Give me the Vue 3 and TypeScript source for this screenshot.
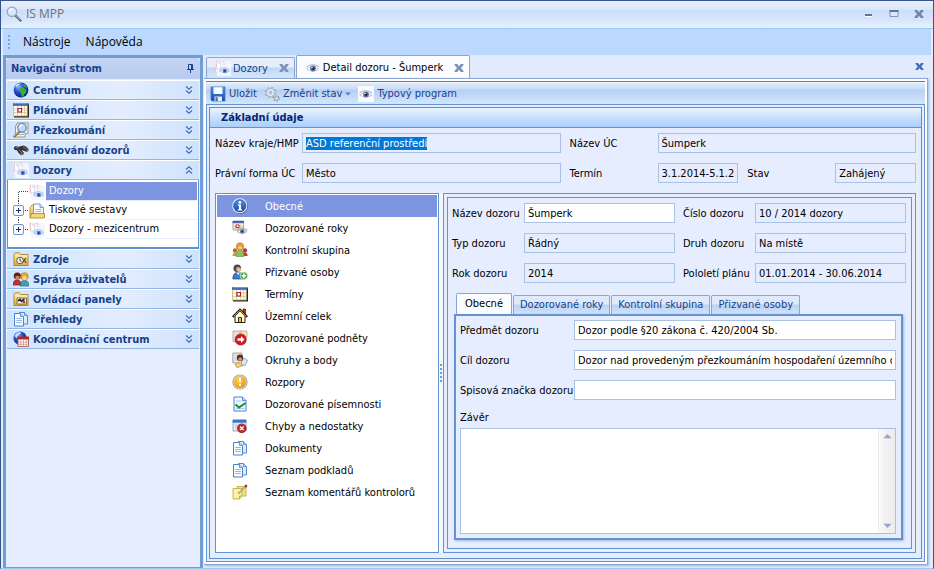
<script setup lang="ts">
import { onMounted, reactive, ref } from 'vue'

interface NavGroup {
  label: string
  icon: string
}
interface TreeNode {
  label: string
  icon: string
  expandable: boolean
}

const groupsAbove: NavGroup[] = [
  { label: 'Centrum', icon: 'globe' },
  { label: 'Plánování', icon: 'calendar' },
  { label: 'Přezkoumání', icon: 'review' },
  { label: 'Plánování dozorů', icon: 'binoculars' },
  { label: 'Dozory', icon: 'eye-doc' },
]
const groupsBelow: NavGroup[] = [
  { label: 'Zdroje', icon: 'folder-clock' },
  { label: 'Správa uživatelů', icon: 'users' },
  { label: 'Ovládací panely', icon: 'folder-gauge' },
  { label: 'Přehledy', icon: 'docs' },
  { label: 'Koordinační centrum', icon: 'globe-cal' },
]
const tree: TreeNode[] = [
  { label: 'Dozory', icon: 'eye-doc', expandable: false },
  { label: 'Tiskové sestavy', icon: 'reports', expandable: true },
  { label: 'Dozory - mezicentrum', icon: 'eye-doc', expandable: true },
]
const sections: NavGroup[] = [
  { label: 'Obecné', icon: 'info' },
  { label: 'Dozorované roky', icon: 'cal-eye' },
  { label: 'Kontrolní skupina', icon: 'group' },
  { label: 'Přizvané osoby', icon: 'user-add' },
  { label: 'Termíny', icon: 'calendar' },
  { label: 'Územní celek', icon: 'house' },
  { label: 'Dozorované podněty', icon: 'doc-arrow' },
  { label: 'Okruhy a body', icon: 'doc-person' },
  { label: 'Rozpory', icon: 'warning' },
  { label: 'Dozorované písemnosti', icon: 'doc-check' },
  { label: 'Chyby a nedostatky', icon: 'win-error' },
  { label: 'Dokumenty', icon: 'docs' },
  { label: 'Seznam podkladů', icon: 'docs' },
  { label: 'Seznam komentářů kontrolorů', icon: 'notes' },
]
const detailTabs = ['Obecné', 'Dozorované roky', 'Kontrolní skupina', 'Přizvané osoby']

const activeNode = ref(0)
const activeSection = ref(0)
const activeTab = ref(0)
const treeOpen = ref(true)
const regionInput = ref<HTMLInputElement | null>(null)

const form = reactive({
  region: 'ASD referenční prostředí',
  unit: 'Šumperk',
  legal: 'Město',
  term: '3.1.2014-5.1.2',
  state: 'Zahájený',
  name: 'Šumperk',
  number: '10 / 2014 dozory',
  type: 'Řádný',
  kind: 'Na místě',
  year: '2014',
  half: '01.01.2014 - 30.06.2014',
  subject: 'Dozor podle §20 zákona č. 420/2004 Sb.',
  goal: 'Dozor nad provedeným přezkoumáním hospodaření územního celk',
  file: '',
  conclusion: '',
})

function toggleGroup(label: string) {
  if (label === 'Dozory') treeOpen.value = !treeOpen.value
}

onMounted(() => {
  regionInput.value?.focus()
  regionInput.value?.select()
})
</script>

<template>
  <div class="window">
    <svg class="sprite" aria-hidden="true">
      <defs>
        <linearGradient id="gBlue" x1="0" y1="0" x2="0" y2="1">
          <stop offset="0" stop-color="#4f90e6" /><stop offset="1" stop-color="#1549a8" />
        </linearGradient>
        <linearGradient id="gFolder" x1="0" y1="0" x2="0" y2="1">
          <stop offset="0" stop-color="#fbeeb0" /><stop offset="1" stop-color="#e0ac3c" />
        </linearGradient>
        <radialGradient id="gGlobe" cx="0.35" cy="0.3" r="0.8">
          <stop offset="0" stop-color="#8fb6ff" /><stop offset="0.4" stop-color="#2c50d6" /><stop offset="1" stop-color="#0a1264" />
        </radialGradient>
        <radialGradient id="gAmber" cx="0.4" cy="0.3" r="0.8">
          <stop offset="0" stop-color="#ffd34e" /><stop offset="1" stop-color="#ec8b06" />
        </radialGradient>
        <symbol id="search" viewBox="0 0 16 16">
          <path d="M9.500 9.500l5 5" stroke="#56606e" stroke-width="2.400" stroke-linecap="round" />
          <path d="M10 9.500l4.500 4.500" stroke="#c0cad6" stroke-width="1" />
          <circle cx="6" cy="5.800" r="4.700" fill="#d4eafb" stroke="#9aa5b3" stroke-width="1.300" />
          <path d="M3.200 5.600A3 3 0 0 1 6.400 2.800" fill="none" stroke="#fff" stroke-width="1.300" />
        </symbol>
        <symbol id="globe" viewBox="0 0 16 16">
          <circle cx="8" cy="8" r="7.400" fill="url(#gGlobe)" />
          <path d="M2 5c1-2 3-3.700 5-4l1 1-1.500 1.500L5.500 4 4.500 6 3 6.500z" fill="#6f9fd0" />
          <path d="M6.500 6l3.500-.5 3.500 2.500L13 11l-2 1.500-.5 2.700-2-1L8 11 6 8.500z" fill="#2fb335" />
          <path d="M10 1.800l3 1.500 1.200 2.500-2-.5-1.700-1z" fill="#3b9b45" />
          <path d="M3 4.500a6 6 0 0 1 3-2.500" stroke="#e8f3ff" stroke-width="1.200" fill="none" />
        </symbol>
        <symbol id="calendar" viewBox="0 0 16 16">
          <path d="M1 2h15v13.500H1z" fill="#2c2618" />
          <path d="M0 2h14.700v12.300H0z" fill="#d3bd80" />
          <path d="M1 4h12.700v9.500H1z" fill="#fffce6" />
          <path d="M1 7h12.700M1 10.500h12.700M4.500 4v9.500M8.500 4v9.500M11.500 4v9.500" stroke="#cfc090" stroke-width="0.800" />
          <path d="M0 1h15.500v2.700H0z" fill="#3559b5" /><path d="M.5 1.300h14v.9H.5z" fill="#8caef0" />
          <path d="M5 6.500h3.500V10H5z" fill="#fff" stroke="#a8203c" stroke-width="1.200" />
        </symbol>
        <symbol id="review" viewBox="0 0 16 16">
          <path d="M4 1h11v10.500h-3v3.500H2.500V5z" fill="#f7f5ee" stroke="#9a978b" />
          <path d="M5 12.500h6M6 10.500h6" stroke="#a4a8b4" />
          <path d="M6.500 9.500l-5 5" stroke="#9b6b3b" stroke-width="2.400" stroke-linecap="round" />
          <path d="M6 9.500l-4.500 4.500" stroke="#eebc72" stroke-width="0.900" />
          <circle cx="9" cy="5.800" r="4.300" fill="#bcd9fb" stroke="#6784b5" stroke-width="1.200" />
          <path d="M6.500 5.500A2.600 2.600 0 0 1 9 3" stroke="#fff" stroke-width="1.300" fill="none" />
        </symbol>
        <symbol id="binoculars" viewBox="0 0 16 16">
          <path d="M.6 5.800L2.500 4l2.800.7L8 4.200l2-.6 2.500.7L15.600 7l-.4 2-2 .8-3.700-1.600-.8.300 2.200 2.300-.7 2-2.200.5-2.400-2.300L4 8.300 1.700 8z" fill="#353231" />
          <path d="M2.500 5.500l3 .4M10 5l3.500 2M6 8l3 3" stroke="#8d8784" stroke-width="0.900" />
          <ellipse cx="9" cy="12" rx="1.500" ry="1" fill="#76706d" /><ellipse cx="14.300" cy="8.500" rx="1" ry="1.200" fill="#76706d" />
        </symbol>
        <symbol id="eye" viewBox="0 0 16 16">
          <path d="M0 0h16v16H0z" fill="#f8fafe" />
          <path d="M1.500 9Q7.500 4.500 14 9 8 13 1.500 9z" fill="#fff" stroke="#b5c0d4" stroke-width="0.800" />
          <path d="M1.500 6.800Q7.500 2.800 14 6.800" fill="none" stroke="#99a7c0" stroke-width="0.900" />
          <circle cx="8" cy="8.500" r="2.900" fill="#5d7396" /><circle cx="8" cy="8.500" r="1.400" fill="#1c2840" />
          <circle cx="7" cy="7.500" r=".8" fill="#fff" />
        </symbol>
        <symbol id="eye-doc" viewBox="0 0 16 16">
          <path d="M0 1h14l2 2v13H2z" fill="#f3f6fd" />
          <path d="M1.500 1h4v8h-4z" fill="#fff" stroke="#d3dbee" stroke-width="0.800" />
          <path d="M1.200 1v8M3 3h2.500" stroke="#f7bdb8" />
          <path d="M7 1.500h2V5" fill="none" stroke="#f7c8c2" />
          <path d="M4.500 11Q9.500 7.500 14.500 11 10 14.500 4.500 11z" fill="#e8effd" stroke="#9db8ea" stroke-width="0.800" />
          <path d="M4.500 9.300Q9.500 6 14.500 9.300" fill="none" stroke="#9db8ea" stroke-width="0.900" />
          <circle cx="9.800" cy="10.900" r="2.100" fill="#4f79cb" /><circle cx="9.800" cy="10.900" r=".9" fill="#1c3b85" />
        </symbol>
        <symbol id="folder" viewBox="0 0 16 16">
          <path d="M1 3.500l1.200-1.700h4L7.500 3.500H15V14.500H1z" fill="url(#gFolder)" stroke="#b07f1d" stroke-width="0.900" />
          <path d="M2 5h12.500" stroke="#fff6c9" />
        </symbol>
        <symbol id="folder-clock" viewBox="0 0 16 16">
          <use href="#folder" />
          <circle cx="7" cy="9.500" r="3.300" fill="#fff" stroke="#5d5442" />
          <path d="M7 7.500v2.200l1.500 1" stroke="#222" fill="none" />
          <path d="M10 11l3-4M11 8l2 4" stroke="#6a4b21" stroke-width="1.200" />
        </symbol>
        <symbol id="folder-gauge" viewBox="0 0 16 16">
          <use href="#folder" />
          <path d="M4 7h9.500v6H4z" fill="#f9f6ee" stroke="#6a5b35" stroke-width="0.800" />
          <path d="M5 10l2-1.500 1.500 1.800L11.500 8" stroke="#2e2220" stroke-width="1.800" fill="none" />
          <circle cx="11" cy="11" r="1.300" fill="#b03527" />
        </symbol>
        <symbol id="users" viewBox="0 0 16 16">
          <path d="M0 14q0-5 4-5t4.500 5z" fill="#c23030" stroke="#6d1717" stroke-width="0.600" />
          <path d="M7 15q0-5.500 4.500-5.500T16 15z" fill="#3fa0b0" stroke="#225a66" stroke-width="0.600" />
          <circle cx="4.300" cy="5" r="3.600" fill="#5e2418" /><path d="M2.500 5.500q2-1.500 4 0v2q-2 2.500-4 0z" fill="#d98552" />
          <circle cx="11.500" cy="5.300" r="3.600" fill="#efab2d" stroke="#a76a14" stroke-width="0.600" /><path d="M9.500 6q2-1.500 4 0v2q-2 2.300-4 0z" fill="#fbd8a3" />
        </symbol>
        <symbol id="docs" viewBox="0 0 16 16">
          <path d="M6.500 1.500h5l3 3V13h-8z" fill="#dcebfd" stroke="#5589cf" />
          <path d="M11.500 1.500v3h3" fill="#a9caf3" stroke="#5589cf" stroke-width="0.800" />
          <path d="M1.500 2.500h6l3 3V15h-9z" fill="#fafdff" stroke="#4a80c9" />
          <path d="M7.500 2.500v3h3" fill="#cbe0f9" stroke="#4a80c9" stroke-width="0.800" />
          <path d="M3.300 7.500h5.500M3.300 9.500h5.500M3.300 11.500h5.500" stroke="#82abe2" stroke-width="0.900" />
        </symbol>
        <symbol id="globe-cal" viewBox="0 0 16 16">
          <circle cx="7" cy="7" r="6.600" fill="url(#gGlobe)" />
          <path d="M1.500 5Q3 1.500 7 1l1 1.500L5 4 4 7z" fill="#c8e0f8" />
          <path d="M5 6.500h10.500V15.500H5z" fill="#fff" stroke="#a5574d" stroke-width="0.900" />
          <path d="M4.500 5.500H16v3H4.500z" fill="#b5281c" />
          <path d="M5 11h10.500M5 13.300h10.500M7.700 8.500v7M10.500 8.500v7M13.200 8.500v7" stroke="#d1988f" stroke-width="0.800" />
        </symbol>
        <symbol id="reports" viewBox="0 0 16 16">
          <path d="M1 14.500V4.500L3 2h4v12.500z" fill="url(#gFolder)" stroke="#b88a26" stroke-width="0.900" />
          <path d="M4.500 1h6.500l3.500 3.500V12h-10z" fill="#fbfdff" stroke="#6d8bbd" stroke-width="0.900" />
          <path d="M11 1v3.500h3.500" fill="#cfe0f7" stroke="#6d8bbd" stroke-width="0.800" />
          <path d="M6.500 6.500h6M6.500 8.500h6" stroke="#95b4e2" />
          <path d="M2.500 10.500h13v4.500H1z" fill="#f6d778" stroke="#b88a26" stroke-width="0.900" />
        </symbol>
        <symbol id="info" viewBox="0 0 16 16">
          <circle cx="8.500" cy="8.500" r="7.500" fill="#3c4c78" opacity=".6" />
          <circle cx="7.800" cy="7.800" r="7.500" fill="#fff" /><circle cx="7.800" cy="7.800" r="6.200" fill="url(#gBlue)" stroke="#1a4599" stroke-width="0.700" />
          <circle cx="7.900" cy="4.400" r="1.400" fill="#fff" /><path d="M5.800 6.500H9v4.800h1.200v1.300H5.800v-1.300H7V7.800H5.800z" fill="#fff" />
        </symbol>
        <symbol id="cal-eye" viewBox="0 0 16 16">
          <path d="M1 1h10.500v9H1z" fill="#fff9e2" stroke="#9f9170" stroke-width="0.800" />
          <path d="M.6 1h11.300v2.200H.6z" fill="#3f63b8" />
          <path d="M1 6h10M1 8h10M4 3v7M8 3v7" stroke="#cabb90" stroke-width="0.800" />
          <path d="M4 5h3v2.500H4z" fill="#fff" stroke="#b11c3a" stroke-width="0.900" />
          <path d="M5 11.500Q10 7.500 15 11.500 10 15 5 11.500z" fill="#f1f4fa" stroke="#98a4b9" stroke-width="0.900" />
          <path d="M5 9.500Q10 6.500 15.500 10" fill="none" stroke="#98a4b9" stroke-width="0.900" />
          <circle cx="10.200" cy="11.400" r="2.200" fill="#5f7ba8" /><circle cx="10.200" cy="11.400" r=".9" fill="#1c2a45" />
        </symbol>
        <symbol id="group" viewBox="0 0 16 16">
          <circle cx="3" cy="8.500" r="2.200" fill="#b56b36" /><circle cx="13" cy="8.500" r="2.200" fill="#a3452b" />
          <path d="M.5 14q0-3.500 2.700-3.500T6 14z" fill="#d99a30" /><path d="M10 14q0-3.500 2.800-3.500t2.800 3.500z" fill="#c8372c" />
          <path d="M4 14.500Q4 8 8 8t4 6.500z" fill="#8fbf5a" stroke="#5c8d2f" stroke-width="0.600" />
          <circle cx="8" cy="4.400" r="3.600" fill="#ef9a2d" stroke="#bb6c14" stroke-width="0.600" />
          <path d="M6.200 4.700q1.800-1.200 3.600 0v1.700q-1.800 2-3.600 0z" fill="#fbc98a" />
        </symbol>
        <symbol id="user-add" viewBox="0 0 16 16">
          <path d="M.8 15Q.8 8.300 6 8.300T11.500 15z" fill="#3f7dcb" stroke="#23497f" stroke-width="0.700" />
          <path d="M4.500 8.500L6.300 11 8 8.500z" fill="#fff" />
          <circle cx="5.300" cy="4.300" r="3.800" fill="#45484f" /><path d="M4.200 3.500q2.500-.7 4.600.5v2.400Q7 9.200 4.500 6.500z" fill="#eebc93" />
          <circle cx="11.800" cy="11.800" r="3.700" fill="#45a53a" stroke="#c9e7c3" stroke-width="0.900" />
          <path d="M11.800 9.600V14M9.600 11.800H14" stroke="#fff" stroke-width="1.600" />
        </symbol>
        <symbol id="house" viewBox="0 0 16 16">
          <path d="M11 1h2.500v5H11z" fill="#d3232a" stroke="#5a0f10" stroke-width="0.700" />
          <path d="M3 8l5-5 5 5v6.500H3z" fill="#fffde0" stroke="#1e1a12" />
          <path d="M.8 9L8 1.800 15.200 9" fill="none" stroke="#1e1a12" stroke-width="2.200" />
          <path d="M1.700 8.500L8 2.300l6.300 6.200" fill="none" stroke="#f5d64a" stroke-width="0.900" />
          <path d="M6.500 9.500h3v5h-3z" fill="#f2c12d" stroke="#1e1a12" stroke-width="0.900" />
        </symbol>
        <symbol id="doc-arrow" viewBox="0 0 16 16">
          <path d="M1 1h9v10.500H1z" fill="#e5e3da" stroke="#b5b1a6" /><path d="M8 1h7v6H8z" fill="#ece2b8" stroke="#b5a878" stroke-width="0.700" />
          <circle cx="8.700" cy="9.500" r="5.600" fill="#d01a22" stroke="#9c1016" stroke-width="0.600" />
          <path d="M5.500 8.200H9V6l3.500 3.500L9 13v-2.200H5.500z" fill="#fff" />
        </symbol>
        <symbol id="doc-person" viewBox="0 0 16 16">
          <path d="M.8 1H10v10H.8z" fill="#dfe0e2" stroke="#a9a9a9" /><path d="M3 12.500l4-2 4 3-6 2.200z" fill="#f5d980" stroke="#a58328" stroke-width="0.700" />
          <circle cx="8" cy="5.800" r="3.200" fill="#5f2f1c" /><path d="M6.500 6q1.700-1 3.300 0v2Q8 9.500 6.500 8z" fill="#e89a4d" />
          <path d="M9 11l3-5 3.500 2.500-2.500 5-3.500-.5z" fill="#dbe6f8" stroke="#7c91b8" stroke-width="0.800" />
          <path d="M4.500 12l4-2 1 4" fill="#f2c75c" />
        </symbol>
        <symbol id="warning" viewBox="0 0 16 16">
          <circle cx="8" cy="8" r="7.600" fill="#8f8b82" /><circle cx="8" cy="8" r="6.900" fill="#d9d5ca" />
          <circle cx="8" cy="8" r="5.900" fill="url(#gAmber)" />
          <path d="M7 3.800h2l-.3 5H7.300z" fill="#fff" /><circle cx="8" cy="10.900" r="1.100" fill="#fff" />
        </symbol>
        <symbol id="doc-check" viewBox="0 0 16 16">
          <path d="M2 1h8.500L14 4.500V15H2z" fill="#f1f7ff" stroke="#4b83cf" />
          <path d="M10.500 1v3.500H14" fill="#b7d4f7" stroke="#4b83cf" stroke-width="0.900" />
          <path d="M4 5h5M4 12.500h8.500" stroke="#a7c6ee" />
          <path d="M3.500 8.500l3.500 3L13.500 7" fill="none" stroke="#148c36" stroke-width="1.900" />
        </symbol>
        <symbol id="win-error" viewBox="0 0 16 16">
          <path d="M1 2h13v11H1z" fill="#e3e8f0" stroke="#9aaac3" /><path d="M.7 1.700h13.600v3H.7z" fill="#3d74c9" />
          <path d="M3 7h5M3 9h3" stroke="#c3cad6" />
          <circle cx="9.800" cy="10.300" r="4.400" fill="#c42b2c" stroke="#841317" stroke-width="0.700" />
          <path d="M8 8.500l3.600 3.600M11.600 8.500L8 12.100" stroke="#fff" stroke-width="1.300" />
        </symbol>
        <symbol id="notes" viewBox="0 0 16 16">
          <path d="M5 2.500h9V12H5z" fill="#f1e67c" stroke="#b8aa3a" stroke-width="0.800" />
          <path d="M1 4.500h9V12l-2.500 3H1z" fill="#fbf3a2" stroke="#b8aa3a" stroke-width="0.800" />
          <path d="M10 12H7.500v3" fill="#e1d158" stroke="#b8aa3a" stroke-width="0.800" />
          <path d="M6.500 9.500L14 2" stroke="#757162" stroke-width="1.500" /><path d="M7 9l6.500-6.500" stroke="#e5e2d4" stroke-width="0.700" />
          <path d="M13.200 2.800l1.600-1.600" stroke="#c42a26" stroke-width="2.400" />
        </symbol>
        <symbol id="save" viewBox="0 0 16 16">
          <path d="M1 1h14v14H2.200L1 13.800z" fill="url(#gBlue)" stroke="#3d70ba" stroke-width="0.800" />
          <path d="M3.500 1.200h9v6.800h-9z" fill="#f7fbff" /><path d="M4.500 10.500h7.500V15H4.500z" fill="#e3edfa" /><path d="M5.500 11.300h2.200V15H5.500z" fill="#3c6cb8" />
        </symbol>
        <symbol id="gears" viewBox="0 0 16 16">
          <circle cx="6.500" cy="6.500" r="5" fill="none" stroke="#a3adbb" stroke-width="1.600" stroke-dasharray="2 1.930" />
          <circle cx="6.500" cy="6.500" r="4" fill="#f4f7fb" stroke="#9ca7b7" stroke-width="0.900" /><circle cx="6.500" cy="6.500" r="1.700" fill="#b5cbee" stroke="#93a1b6" stroke-width="0.700" />
          <circle cx="12.500" cy="12.500" r="2.600" fill="none" stroke="#8693a6" stroke-width="1.400" stroke-dasharray="1.400 1.320" />
          <circle cx="12.500" cy="12.500" r="1.700" fill="#f2f6fb" stroke="#8693a6" stroke-width="0.800" />
        </symbol>
        <symbol id="close" viewBox="0 0 10 10">
          <path d="M.5 1h2.800L5 3.300 6.700 1h2.800v1L7 5l2.500 3v1H6.700L5 6.700 3.300 9H.5V8L3 5 .5 2z" />
        </symbol>
      </defs>
    </svg>

    <header class="titlebar">
      <svg class="app-icon"><use href="#search" /></svg>
      <span class="title">IS MPP</span>
      <div class="win-buttons">
        <button type="button" aria-label="Minimalizovat">
          <svg viewBox="0 0 10 10"><path d="M1 5h7v2H1z" fill="#66758f" /><path d="M1 7h7v1H1z" fill="#fff" /></svg>
        </button>
        <button type="button" aria-label="Maximalizovat">
          <svg viewBox="0 0 10 10"><path d="M1 1.500h8v6H1z" fill="#dbe6f8" stroke="#8195b8" /><path d="M.5 1h9v2h-9z" fill="#66758f" /></svg>
        </button>
        <button type="button" aria-label="Zavřít"><svg class="close-win"><use href="#close" /></svg></button>
      </div>
    </header>

    <nav class="menubar">
      <svg class="grip" viewBox="0 0 4 16"><path d="M1 1h2v2H1zM1 5h2v2H1zM1 9h2v2H1zM1 13h2v2H1z" /></svg>
      <button type="button">Nástroje</button>
      <button type="button">Nápověda</button>
    </nav>

    <div class="workspace">
      <aside class="side">
        <div class="side-head">
          <h2>Navigační strom</h2>
          <button type="button" aria-label="Připnout">
            <svg viewBox="0 0 9 9" fill="none" stroke="#15428b"><path d="M2.500 5V.5h4V5M5.500 .5V5M1 5.500h7M4.500 5.500V9" /></svg>
          </button>
        </div>
        <div class="side-body">
          <button v-for="g in groupsAbove" :key="g.label" type="button" class="group" @click="toggleGroup(g.label)">
            <svg class="ico"><use :href="'#' + g.icon" /></svg>
            <span>{{ g.label }}</span>
            <svg class="chev" viewBox="0 0 8 8">
              <path v-if="g.label === 'Dozory' && treeOpen" d="M1 3.500L4 .8l3 2.700M1 7.500l3-2.700 3 2.700" />
              <path v-else d="M1 .5l3 2.700L7 .5M1 4.500l3 2.700 3-2.700" />
            </svg>
          </button>
          <ul v-if="treeOpen" class="tree">
            <li v-for="(n, i) in tree" :key="n.label">
              <button v-if="n.expandable" type="button" class="node-toggle" :aria-label="'Rozbalit ' + n.label">
                <svg viewBox="0 0 20 19">
                  <path class="dots" d="M9.500 0v9.500H20" />
                  <path v-if="i < tree.length - 1" class="dots" d="M9.500 10v9" />
                  <rect x="4.500" y="4.500" width="10" height="10" rx="1.500" fill="#f4f8ff" stroke="#7895c4" />
                  <path d="M7 9.500h5M9.500 7v5" stroke="#23355c" />
                </svg>
              </button>
              <svg v-else class="node-line" viewBox="0 0 20 19"><path class="dots" d="M9.500 19V9.500H20" /></svg>
              <svg class="ico"><use :href="'#' + n.icon" /></svg>
              <button type="button" class="node" :class="{ on: activeNode === i }" @click="activeNode = i">{{ n.label }}</button>
            </li>
          </ul>
          <button v-for="g in groupsBelow" :key="g.label" type="button" class="group">
            <svg class="ico"><use :href="'#' + g.icon" /></svg>
            <span>{{ g.label }}</span>
            <svg class="chev" viewBox="0 0 8 8"><path d="M1 .5l3 2.700L7 .5M1 4.500l3 2.700 3-2.700" /></svg>
          </button>
        </div>
      </aside>

      <main class="docs">
        <div class="doc-tabs">
          <div class="doc-tab">
            <svg class="ico"><use href="#eye-doc" /></svg>
            <button type="button" class="tab-name">Dozory</button>
            <button type="button" aria-label="Zavřít Dozory"><svg class="tab-x"><use href="#close" /></svg></button>
          </div>
          <div class="doc-tab on">
            <svg class="ico"><use href="#eye" /></svg>
            <button type="button" class="tab-name">Detail dozoru - Šumperk</button>
            <button type="button" aria-label="Zavřít Detail dozoru"><svg class="tab-x"><use href="#close" /></svg></button>
          </div>
          <button type="button" class="close-all" aria-label="Zavřít vše"><svg><use href="#close" /></svg></button>
        </div>

        <div class="doc-frame">
          <div class="toolbar">
            <button type="button"><svg class="ico"><use href="#save" /></svg>Uložit</button>
            <button type="button">
              <svg class="ico"><use href="#gears" /></svg>Změnit stav
              <svg class="caret" viewBox="0 0 6 4"><path d="M0 .5h6L3 3.500z" /></svg>
            </button>
            <button type="button"><svg class="ico"><use href="#eye" /></svg>Typový program</button>
          </div>

          <div class="outer">
            <section class="panel">
              <h3>Základní údaje</h3>
              <div class="panel-body">
                <div class="grid head-grid">
                  <label for="region">Název kraje/HMP</label>
                  <input id="region" ref="regionInput" v-model="form.region" readonly />
                  <label for="unit">Název ÚC</label>
                  <input id="unit" v-model="form.unit" readonly />
                  <label for="legal">Právní forma ÚC</label>
                  <input id="legal" v-model="form.legal" readonly />
                  <label for="term">Termín</label>
                  <div class="pair">
                    <input id="term" v-model="form.term" readonly />
                    <label for="state">Stav</label>
                    <input id="state" v-model="form.state" readonly />
                  </div>
                </div>

                <div class="split">
                  <ul class="sections">
                    <li v-for="(s, i) in sections" :key="s.label">
                      <button type="button" :class="{ on: activeSection === i }" @click="activeSection = i">
                        <svg class="ico"><use :href="'#' + s.icon" /></svg><span>{{ s.label }}</span>
                      </button>
                    </li>
                  </ul>
                  <div class="splitter">
                    <svg viewBox="0 0 3 20"><path d="M1 1h2v2H1zM1 5h2v2H1zM1 9h2v2H1zM1 13h2v2H1zM1 17h2v2H1z" /></svg>
                  </div>
                  <div class="detail">
                    <div class="detail-in">
                      <div class="grid form-grid">
                        <label for="name">Název dozoru</label>
                        <input id="name" v-model="form.name" />
                        <label for="number">Číslo dozoru</label>
                        <input id="number" v-model="form.number" readonly />
                        <label for="type">Typ dozoru</label>
                        <input id="type" v-model="form.type" readonly />
                        <label for="kind">Druh dozoru</label>
                        <input id="kind" v-model="form.kind" readonly />
                        <label for="year">Rok dozoru</label>
                        <input id="year" v-model="form.year" readonly />
                        <label for="half">Pololetí plánu</label>
                        <input id="half" v-model="form.half" readonly />
                      </div>

                      <div class="tabs" role="tablist">
                        <button v-for="(t, i) in detailTabs" :key="t" type="button" role="tab" :aria-selected="activeTab === i"
                          :class="{ on: activeTab === i }" @click="activeTab = i">{{ t }}</button>
                      </div>
                      <div class="tab-page">
                        <div class="grid page-grid">
                          <label for="subject">Předmět dozoru</label>
                          <input id="subject" v-model="form.subject" />
                          <label for="goal">Cíl dozoru</label>
                          <input id="goal" v-model="form.goal" />
                          <label for="file">Spisová značka dozoru</label>
                          <input id="file" v-model="form.file" />
                        </div>
                        <label class="memo-label" for="conclusion">Závěr</label>
                        <div class="memo">
                          <textarea id="conclusion" v-model="form.conclusion"></textarea>
                          <div class="scroll" aria-hidden="true">
                            <svg viewBox="0 0 10 6"><path d="M5 0l5 5H0z" /></svg>
                            <svg viewBox="0 0 10 6"><path d="M0 1h10L5 6z" /></svg>
                          </div>
                        </div>
                      </div>
                    </div>
                  </div>
                </div>
              </div>
            </section>
          </div>
        </div>
      </main>
    </div>
  </div>
</template>

<style>
html,
body {
  background: #e6edfe;
}
</style>

<style scoped>
* {
  box-sizing: border-box;
}
.window {
  display: flex;
  flex-direction: column;
  min-height: 100vh;
  border: 1px solid #34548d;
  border-bottom-color: #9fc6f0;
  background: #e2ecfd;
  color: #000;
  font: 11px/14px 'DejaVu Sans Condensed', 'Noto Sans', sans-serif;
}
.sprite {
  position: absolute;
  width: 0;
  height: 0;
}
button {
  padding: 0;
  border: 0;
  background: none;
  color: inherit;
  font: inherit;
  text-align: left;
  white-space: nowrap;
}
button svg {
  display: block;
}
ul {
  margin: 0;
  padding: 0;
  list-style: none;
}
h2,
h3 {
  margin: 0;
  font-size: 11px;
}
.ico {
  flex: none;
  width: 16px;
  height: 16px;
}

.titlebar {
  display: flex;
  align-items: center;
  height: 28px;
  padding: 0 9px 2px 5px;
  border-bottom: 1px solid #9fc6f0;
  background: linear-gradient(#e8effd 0, #dce7fc 8px, #cddff8 9px, #d3e3fb 17px, #e6f1fe 27px);
}
.app-icon {
  width: 16px;
  height: 16px;
}
.title {
  margin-left: 4px;
  color: #6c7178;
  font: 12px/16px 'Open Sans', sans-serif;
}
.win-buttons {
  display: flex;
  gap: 15px;
  margin-left: auto;
}
.win-buttons svg {
  width: 10px;
  height: 10px;
}
.close-win {
  fill: #7387ab;
}

.menubar {
  display: flex;
  align-items: center;
  gap: 15px;
  height: 26px;
  margin: 0 2px;
  padding-left: 4px;
  background: #bbd9fe;
  font: 12px/16px 'Open Sans', sans-serif;
}
.grip {
  width: 4px;
  height: 16px;
  margin-right: -3px;
  fill: #7ba4dc;
}

.workspace {
  display: flex;
  flex: 1;
  margin: 0 2px;
}
.side {
  display: flex;
  flex-direction: column;
  flex: none;
  width: 200px;
  border: 3px solid #709dd2;
  border-bottom-width: 1px;
  background: #e6edfe;
}
.side-head {
  display: flex;
  align-items: center;
  justify-content: space-between;
  height: 21px;
  padding: 0 5px;
  border-radius: 4px 4px 0 0;
  background: linear-gradient(#c5d5f3, #b8caee);
  color: #15428b;
}
.side-head svg {
  width: 9px;
  height: 9px;
}
.side-body {
  display: flex;
  flex-direction: column;
  padding: 1px 1px 0;
}
.group {
  display: flex;
  align-items: center;
  gap: 4px;
  height: 20px;
  padding: 0 6px;
  border-top: 1px solid #fff;
  border-bottom: 1px solid #8fb6e6;
  background: linear-gradient(90deg, #cfe5ff, #e4edfe 60%, #cfe3fe);
  color: #15428b;
  font-weight: bold;
}
.group span,
.tab-name,
.sections span {
  padding-top: 1px;
}
.chev {
  width: 8px;
  height: 8px;
  margin-left: auto;
  fill: none;
  stroke: #4b74b3;
  stroke-width: 1.3px;
}
.tree {
  padding: 2px 1px 8px;
  border: 1px solid #5f93cf;
  border-bottom-width: 2px;
  border-top: 0;
  background: #fff;
}
.tree li {
  display: flex;
  align-items: center;
  height: 19px;
}
.node-toggle svg,
.node-line {
  display: block;
  width: 20px;
  height: 19px;
}
.dots {
  fill: none;
  stroke: #444;
  stroke-dasharray: 1 1;
}
.node {
  flex: 1;
  height: 19px;
  margin-left: 1px;
  padding-left: 3px;
  border-bottom: 1px solid #e6edfb;
}
.node.on {
  background: #7d95e0;
  color: #fff;
}

.docs {
  display: flex;
  flex-direction: column;
  flex: 1;
  min-width: 0;
  padding: 0 3px 3px 1px;
  background: #e2ebfc;
}
.doc-tabs {
  display: flex;
  align-items: flex-end;
  height: 23px;
  padding-left: 2px;
}
.doc-tab {
  display: flex;
  align-items: center;
  gap: 2px;
  height: 21px;
  margin-right: 1px;
  padding: 0 5px 0 8px;
  border: 1px solid #8ba4d0;
  border-bottom: 0;
  border-radius: 2px 2px 0 0;
  background: linear-gradient(#e6eefb 45%, #bfd6f5 50%, #d6e6fb);
  color: #15428b;
}
.doc-tab .tab-name {
  margin-right: 9px;
}
.doc-tab.on {
  height: 24px;
  margin-bottom: -1px;
  background: #fbfcff;
  color: #000;
}
.tab-x {
  width: 10px;
  height: 10px;
  fill: #7e92b7;
}
.close-all {
  align-self: center;
  margin: 0 4px 0 auto;
}
.close-all svg {
  width: 9px;
  height: 9px;
  fill: #3f6fb5;
}
.doc-frame {
  display: flex;
  flex-direction: column;
  flex: 1;
  padding: 2px;
  border: 1px solid #8ba4d0;
  border-left: 0;
  background: #fff;
  box-shadow: 1px 1px 2px #9fb9df;
}
.toolbar {
  display: flex;
  align-items: center;
  gap: 7px;
  height: 23px;
  padding: 1px 0 0 4px;
  border-top: 1px solid #4f80bd;
  background: linear-gradient(#f4f8fe 0, #dbe7fb 2px, #c9dcf8 7px, #b5cff5 8px, #d2e4f8 21px);
  color: #15428b;
}
.toolbar button {
  display: flex;
  align-items: center;
  gap: 3px;
}
.caret {
  width: 6px;
  height: 4px;
  fill: #5f7fb2;
}
.outer {
  display: flex;
  flex: 1;
  padding: 2px;
  border: 1px solid #5f93d3;
  background: #e6edfe;
}
.panel {
  display: flex;
  flex-direction: column;
  flex: 1;
  min-width: 0;
  border: 1px solid #5f8dcb;
}
.panel h3 {
  height: 20px;
  padding-left: 11px;
  border-bottom: 1px solid #5f93d3;
  background: linear-gradient(#e8f3ff, #cfe4fe 8px, #bddafd 12px, #abcffb);
  color: #08246b;
  line-height: 20px;
}
.panel-body {
  display: flex;
  flex-direction: column;
  flex: 1;
  padding: 5px;
}
.grid {
  display: grid;
  align-items: center;
  row-gap: 10px;
}
label {
  padding-top: 1px;
  white-space: nowrap;
}
input,
textarea {
  width: 100%;
  min-width: 0;
  margin: 0;
  border: 1px solid #a9c1e2;
  border-radius: 0;
  outline: 0;
  background: #fff;
  color: #000;
  font: inherit;
}
input {
  height: 20px;
  padding: 0 3px;
}
input:read-only {
  background: #e6edfe;
}
input::selection {
  background: #0078d7;
  color: #fff;
}
.head-grid {
  grid-template-columns: 78px minmax(0, 1fr) 79px minmax(0, 1fr);
  column-gap: 9px;
}
.pair {
  display: grid;
  grid-template-columns: 1fr 79px 1fr;
  align-items: center;
  column-gap: 9px;
}
.split {
  display: flex;
  flex: 1;
  margin-top: 10px;
}
.sections {
  flex: none;
  width: 224px;
  padding: 1px;
  border: 1px solid #5f93d3;
  background: #fff;
}
.sections button {
  display: flex;
  align-items: center;
  gap: 17px;
  width: 100%;
  height: 22px;
  padding-left: 15px;
}
.sections button.on {
  background: #7d95e0;
  color: #fff;
}
.splitter {
  display: flex;
  align-items: center;
  flex: none;
  width: 4px;
  background: #f3f7ff;
}
.splitter svg {
  width: 3px;
  height: 20px;
  fill: #6d99d8;
}
.detail {
  display: flex;
  flex: 1;
  min-width: 0;
  padding: 3px;
  border: 1px solid #5f93d3;
}
.detail-in {
  display: flex;
  flex-direction: column;
  flex: 1;
  min-width: 0;
  padding: 5px 5px 8px 4px;
  border: 1px solid #5f93d3;
}
.form-grid {
  grid-template-columns: 64px minmax(0, 1fr) 64px minmax(0, 1fr);
  column-gap: 8px;
}
.tabs {
  display: flex;
  align-items: flex-end;
  gap: 1px;
  height: 21px;
  margin-top: 10px;
  padding-left: 4px;
}
.tabs button {
  height: 19px;
  padding: 0 6px;
  border: 1px solid #8ba4d0;
  border-bottom: 0;
  border-radius: 2px 2px 0 0;
  background: linear-gradient(#dfe9fa 45%, #b9d2f4 50%, #d0e2fa);
  color: #15428b;
}
.tabs button.on {
  height: 21px;
  padding: 0 8px;
  background: #fbfcff;
  color: #000;
}
.tab-page {
  display: flex;
  flex-direction: column;
  flex: 1;
  margin: 0 3px 0 2px;
  padding: 4px 5px 4px 4px;
  border: 2px solid #6593d0;
  box-shadow: 1px 1px 2px #9fb9df;
}
.page-grid {
  grid-template-columns: 110px minmax(0, 1fr);
  column-gap: 4px;
}
.memo-label {
  margin-top: 8px;
  line-height: 18px;
}
.memo {
  display: flex;
  flex: 1;
  margin-top: 1px;
  border: 1px solid #a9c1e2;
  background: #fff;
}
.memo textarea {
  flex: 1;
  border: 0;
  resize: none;
}
.scroll {
  display: flex;
  flex-direction: column;
  align-items: center;
  justify-content: space-between;
  width: 17px;
  padding: 5px 0;
  border-left: 1px solid #ececec;
  background: linear-gradient(90deg, #fafafa, #f2f2f2 30%, #ededed);
}
.scroll svg {
  width: 9px;
  height: 5px;
  fill: #98a5cc;
}
</style>
